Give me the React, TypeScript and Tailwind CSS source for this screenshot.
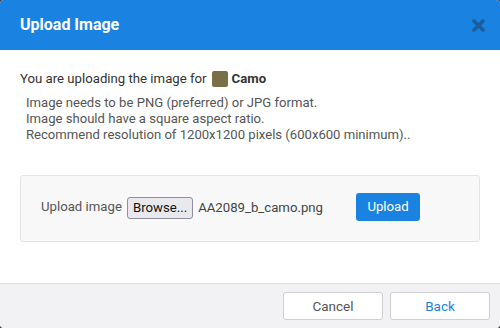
export default function App() {
  return (
    <div className="w-[500px] h-[328px] bg-[#3a3a3a] font-['Roboto','Liberation_Sans',sans-serif]">
      <div className="flex flex-col w-full h-full bg-white rounded-[4px] overflow-hidden">
        {/* Header */}
        <div className="flex items-center justify-between h-[50px] px-5 bg-[#1a83e1]">
          <span className="text-[16px] font-bold text-white">Upload Image</span>
          <svg width="13" height="13" viewBox="0 0 13 13" className="mr-[-5px]">
            <path d="M2 2 L11 11 M11 2 L2 11" stroke="#1d5c99" strokeWidth="3.6" strokeLinecap="round" />
          </svg>
        </div>

        {/* Body */}
        <div className="flex flex-col flex-1 px-5 pt-[19px]">
          <div className="flex items-center text-[13.2px] text-[#333]">
            <span>You are uploading the image for</span>
            <span className="w-4 h-4 ml-[5px] mr-[4px] rounded-[2px] bg-[#797045]"></span>
            <span className="font-bold">Camo</span>
          </div>
          <div className="flex flex-col mt-[6px] pl-[6px] text-[13.1px] leading-[16px] text-[#555]">
            <span>Image needs to be PNG (preferred) or JPG format.</span>
            <span>Image should have a square aspect ratio.</span>
            <span>Recommend resolution of 1200x1200 pixels (600x600 minimum)..</span>
          </div>

          <div className="flex items-center h-[67px] mt-[32px] px-5 bg-[#f8f8f9] border border-[#e4e4e6] rounded-[3px] text-[13.2px] text-[#555]">
            <span className="mb-[3px]">Upload image</span>
            <span className="flex items-center h-[22px] ml-[5px] px-[5px] bg-[#e9e9ed] border border-[#8f8f9d] rounded-[3px] text-[#111]">Browse...</span>
            <span className="ml-[5px] text-[#444]">AA2089_b_camo.png</span>
            <span className="flex items-center justify-center w-[64px] h-[28px] ml-[33px] mb-[3px] bg-[#1a83e1] rounded-[3px] text-white">Upload</span>
          </div>
        </div>

        {/* Footer */}
        <div className="flex items-center justify-end gap-[7px] h-[45px] px-[10px] bg-[#f2f2f4] border-t border-[#dddde0]">
          <button className="w-[100px] h-[28px] bg-white border border-[#cfcfd3] rounded-[3px] text-[13.5px] text-[#555]">Cancel</button>
          <button className="w-[100px] h-[28px] bg-white border border-[#cfcfd3] rounded-[3px] text-[13.5px] text-[#1a83e1]">Back</button>
        </div>
      </div>
    </div>
  );
}
